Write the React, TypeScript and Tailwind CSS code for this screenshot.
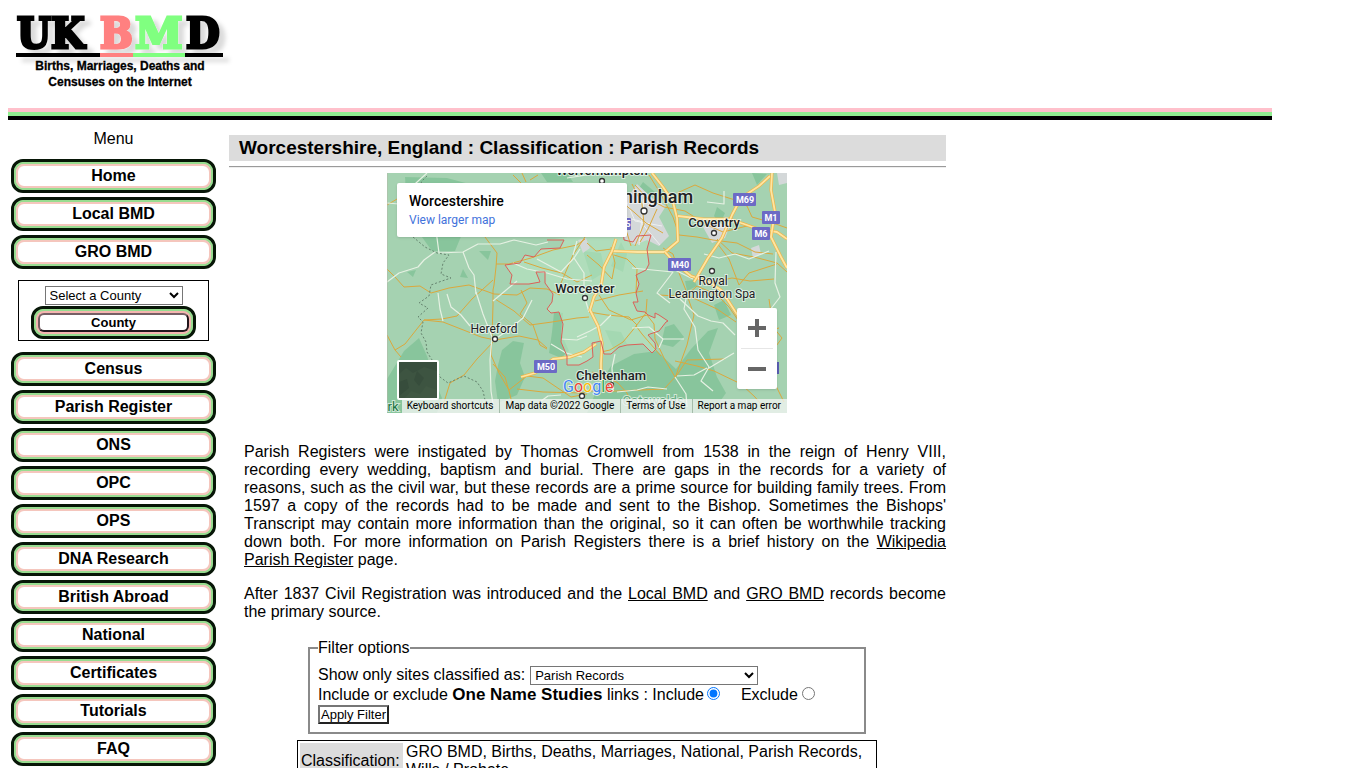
import React, { useState } from 'react';

const topLinks = ['Home', 'Local BMD', 'GRO BMD'];
const bottomLinks = ['Census', 'Parish Register', 'ONS', 'OPC', 'OPS', 'DNA Research', 'British Abroad', 'National', 'Certificates', 'Tutorials', 'FAQ'];

const MenuLink = ({ label }: { label: string }) => (
    <a href="#" className="block rounded-xl border-3 border-[#071607] bg-[#98dc90]">
        <span className="block rounded-[10px] border-2 border-[#98dc90] bg-[#ffc0cb]">
            <span className="block rounded-lg border-2 border-[#f5c6bd] bg-white text-center font-bold h-6 leading-[19px]">{label}</span>
        </span>
    </a>
);

const Logo = () => (
    <svg width="232" height="92" viewBox="8 8 232 92" role="img" aria-label="UK BMD">
        <defs>
            <filter id="logoShadow" x="-10%" y="-10%" width="130%" height="140%">
                <feDropShadow dx="6" dy="5" stdDeviation="2" floodColor="#000" floodOpacity="0.14" />
            </filter>
        </defs>
        <g filter="url(#logoShadow)" fontFamily="'DejaVu Serif Condensed', 'DejaVu Serif', serif" fontWeight="bold" fontSize="43" strokeWidth="3">
            <text x="17" y="48" stroke="#000">U</text>
            <text x="51" y="48" stroke="#000">K</text>
            <text x="100" y="48" fill="#ff8080" stroke="#ff8080">B</text>
            <text x="135" y="48" fontFamily="'DejaVu Serif', serif" fill="#80ff80" stroke="#80ff80">M</text>
            <text x="186" y="48" stroke="#000">D</text>
            <path d="M16 55H223" stroke="#000" strokeWidth="4" />
            <path d="M100 55H133" stroke="#ff8080" strokeWidth="4" />
            <path d="M133 55H185" stroke="#80ff80" strokeWidth="4" />
        </g>
        <g fontFamily="'Liberation Sans', Arial, sans-serif" fontWeight="bold" fontSize="12" textAnchor="middle" stroke="#000" strokeWidth=".3">
            <text x="120" y="70">Births, Marriages, Deaths and</text>
            <text x="120" y="86">Censuses on the Internet</text>
        </g>
    </svg>
);

const badges = [
    { t: 'M69', x: 358, y: 27 },
    { t: 'M1', x: 384, y: 45 },
    { t: 'M6', x: 374, y: 61 },
    { t: 'M40', x: 293, y: 92 },
    { t: 'M50', x: 159, y: 194 },
];

const minorRoads = [
    'M0 96L8 104 17 114 33 113 44 120 62 115 82 112 107 121 130 122 143 115 160 116 173 122',
    'M98 64L110 80 109 94 107 112 106 117 106 132 105 165 104 182 112 200 122 217',
    'M109 91L122 91 144 85 166 77 190 72 198 66',
    'M0 162L8 177 18 171 37 147 55 146 70 143 85 126 106 107M8 177L14 184M37 147L56 149 79 158 94 164 108 167 132 163 151 167 160 175',
    'M108 126L127 138 143 152 165 149 190 145 202 144',
    'M108 167L90 186 77 202 63 210 58 226 55 234',
    'M106 191L118 204 122 218 126 234M122 217L140 203 156 205 184 224 200 221',
    'M134 117L140 130 133 141 146 152 153 172 160 176',
    'M151 2L143 7M126 2L135 11',
    'M130 216L156 219 196 220 200 218 230 218 277 216 290 202 300 187 338 186',
    'M200 70L209 78 225 76M200 82L212 92 225 106 228 90 224 74',
    'M205 102L190 109 175 100 155 95 137 89',
    'M262 2L272 18 286 44 292 62 310 64 326 67 350 70 368 79 386 81',
    'M290 20L308 12 326 20 348 27 360 33 365 44 386 50 400 55',
    'M248 12L260 25 277 34 298 38 320 52 336 59 360 53',
    'M330 66L345 80 367 84 390 90 400 99',
    'M330 70L342 86 352 112 362 100 390 91',
    'M316 111L345 105 363 108 387 106',
    'M310 113L300 122 307 142 300 172 288 205',
    'M310 113L330 122 342 134 353 150 374 160 392 155',
    'M212 122L222 137 244 147 260 142 267 151 268 166 277 185 288 204',
    'M202 139L220 142 242 144 250 152 236 169 223 177 214 179',
    'M288 188L310 193 327 198 354 211 368 224 377 235',
    'M260 126L259 140 249 153 255 161 274 183',
    'M272 122L304 124 330 136 349 149',
    'M382 126L386 154 395 165 384 180 386 207 397 229',
    'M205 199L218 203 231 210 240 220 246 235',
    'M222 19L235 29 248 40 259 50 276 60M245 11L255 31 257 51 248 73',
    'M232 43L240 60 244 73M270 36L261 56 253 69',
    'M0 32L10 26M135 0L139 9M174 110L186 82 198 64',
    'M300 120L292 100 286 81 276 75',
    'M227 82L240 86 250 96 249 120M208 128L232 122 256 118',
];

const majorRoads = [
    'M225 78L251 79 278 79 291 68 290 45 286 29 276 14 265 0',
    'M229 66L225 78 217 94 214 113 207 124 203 137 211 153 215 170 214 190 214 208',
    'M291 43L317 46 342 46 357 51 371 56 390 59 400 66',
    'M278 79L289 91 304 103 322 109 334 117 342 129 355 149',
    'M307 109L321 85 335 65 345 42 354 25 372 13 383 3',
    'M385 0L384 17 388 39 384 64 394 84 400 95',
    'M134 204L148 200 166 186 183 184 197 179 209 171',
];

const whiteRoads = [
    'M48 50L52 80 76 79 91 71 113 71 127 67 149 72 161 69',
    'M48 79L37 87 31 94 12 100 0 109M76 79L82 95 87 102 89 121',
    'M51 120L53 136 56 148M60 121L64 134 74 142 83 153',
    'M89 119L96 141 105 164 103 187 104 218 106 231',
    'M145 127L136 145 120 158 108 166',
    'M130 108L118 118 106 128',
    'M150 86L174 99 187 85 193 76M187 85L197 100 197 122 202 139',
    'M224 142L214 152 203 158 190 164',
    'M278 77L288 97 306 106M300 121L297 136 308 154 311 177 322 194 314 208 326 218',
    'M293 126L311 143 324 148 336 150 348 162',
    'M290 203L307 202 320 195M288 204L299 221 300 234',
    'M322 195L347 180M245 155L262 154 276 166 297 166M276 166L272 175',
    'M245 95L286 99 270 120 283 130',
    'M317 81L332 85 348 81 362 86 382 78',
    'M0 30L12 31 29 10 40 0M389 79L388 110 393 124 383 137 371 150',
    'M320 29L337 31 337 18',
    'M164 171L179 180 195 184M174 166L190 167 200 163',
    'M230 219L250 217 261 214 280 216M150 231L161 223 174 222',
    'M228 181L225 195 226 218M180 5L200 2',
    'M126 90L140 96 160 100 180 106 205 108M186 82L190 68',
];

const border = 'M160 67L177 67 173 75 154 76 147 84 138 82 133 90 118 92 125 102 123 111 142 111 153 109 149 99 158 99 158 110 166 121 165 129 160 136 164 140 172 139 176 151 174 169 180 183 180 192 192 192 200 188 206 184 205 170 214 168 217 181 224 181 232 174 240 172 256 171 261 176 265 180 269 176 268 170 261 162 263 161 272 158 279 149 281 148 272 142 268 140 268 145 261 142 258 139 250 138 246 129 251 129 249 120 252 111 249 102 259 97 262 91 260 76 264 62 250 63 246 69 237 67 236 56';

const parks = [
    'M18 4L60 5 86 12 88 30 68 78 45 78 27 53 20 40Z',
    'M154 0L180 0 186 9 160 9Z',
    'M115 177L126 168 137 170 133 190 138 204 130 222 111 230 108 208 111 192Z',
    'M32 165L40 183 50 213 55 225 50 240 0 240 0 206 17 178Z',
    'M167 139L176 140 174 160 182 178 174 185 162 180 165 159Z',
    'M224 193L247 181 270 178 289 196 304 176 321 158 331 155 322 180 330 204 339 220 325 240 200 240 210 216Z',
    'M218 157L234 159 240 171 227 177Z',
    'M256 9L268 19 261 28 250 18Z',
    'M278 154L287 151 297 164 286 174 274 171Z',
    'M330 34L338 40 333 51 327 43ZM327 132L337 127 344 142 332 147Z',
    'M92 78L104 78 101 87ZM20 99L29 97 26 104ZM76 96L81 105 73 104Z',
    'M196 78L214 80 218 99 205 107ZM365 0L380 1 370 12Z',
    'M234 69L240 81 236 99 224 93ZM298 108L307 107 310 113 300 118Z',
];

const MapArt = () => (
    <svg className="block" width="400" height="240" viewBox="0 0 400 240" role="img" aria-label="Map of Worcestershire">
        <rect width="400" height="240" fill="#a5d2b1" />
        <g fill="#82c397" opacity=".8">{parks.map((d) => <path key={d} d={d} />)}</g>
        <path d={border} fill="#b8e5c2" opacity=".6" />
        <path d="M232 25L243 21 250 11 265 25 279 33 272 44 282 63 272 73 260 67 248 72 236 65ZM316 54L329 48 342 55 338 65 325 70ZM191 67L199 65 203 75 196 80ZM364 75L372 72 374 81 366 85ZM390 0H400V10L392 12Z" fill="#d4d8d9" />
        <path d="M232 43L253 48 273 72M238 25L248 48 275 53M257 26L252 72" fill="none" stroke="#eef0ef" strokeWidth="1" />
        <g fill="none" stroke="#dba83c" strokeWidth="1" strokeLinejoin="round">{minorRoads.map((d) => <path key={d} d={d} />)}</g>
        <g fill="none" stroke="#e6f1e3" strokeWidth="1.2" strokeLinejoin="round">{whiteRoads.map((d) => <path key={d} d={d} />)}</g>
        <g fill="none" strokeLinejoin="round">
            {majorRoads.map((d) => (
                <g key={d}>
                    <path d={d} stroke="#eeb54b" strokeWidth="3.2" />
                    <path d={d} stroke="#ffe5a0" strokeWidth="1.8" />
                </g>
            ))}
        </g>
        <path d="M40 3L34 9 38 15M26 64L38 74 50 80 62 82 56 90 54 101 64 105 55 108 44 112 42 123 32 130 41 135 31 144 36 149 34 160 39 169 40 179 47 190 53 204 61 210 77 203 90 209 96 218 98 227" fill="none" stroke="#66846f" strokeWidth="1" strokeDasharray="2 2" />
        <path d={border} fill="none" stroke="#db6058" strokeWidth="1" />
        <path d="M0 0V240" stroke="#b4b8a8" strokeWidth="1" />
        <g fill="#fff" stroke="#333" strokeWidth="1.3">
            <circle cx="215" cy="8" r="2.5" />
            <circle cx="257" cy="38" r="3" />
            <circle cx="327" cy="60" r="2.5" />
            <circle cx="325" cy="98" r="2.5" />
            <circle cx="198" cy="125" r="2.5" />
            <circle cx="108" cy="166" r="2.5" />
            <circle cx="224" cy="212" r="2.5" />
            <circle cx="195" cy="223" r="2.5" />
        </g>
        <g fontFamily="Roboto, sans-serif" fill="#202124" stroke="#fff" strokeWidth="2" strokeOpacity=".6" paintOrder="stroke" fontSize="12" textAnchor="middle">
            <text x="215" y="2" fontSize="13" fontWeight="500">Wolverhampton</text>
            <text x="257" y="30" fontSize="18" fontWeight="500">Birmingham</text>
            <text x="327" y="54" fontWeight="500" fontSize="13">Coventry</text>
            <text x="326" y="112">Royal</text>
            <text x="325" y="125">Leamington Spa</text>
            <text x="198" y="120" fontWeight="500" fontSize="13">Worcester</text>
            <text x="107" y="160">Hereford</text>
            <text x="224" y="207" fontWeight="500" fontSize="13">Cheltenham</text>
            <text x="266" y="232" fontSize="13" fill="#5fa97c">Cotswolds</text>
            <text x="6" y="238" fontSize="13" fill="#197341">rk</text>
        </g>
        <g fontFamily="Roboto, sans-serif" fontSize="9" fontWeight="bold" textAnchor="middle" fill="#fff">
            <rect x="226" y="45" width="18" height="12" rx="1" fill="#6c6ac5" />
            <text x="241" y="54">5</text>
            <rect x="381" y="189" width="11" height="12" fill="#5a5db2" />
            {badges.map((b) => (
                <g key={b.t}>
                    <rect x={b.t.length === 2 ? b.x - 9 : b.x - 12} y={b.y - 7} width={b.t.length === 2 ? 18 : 23} height="13" rx="1" fill="#6c6ac5" />
                    <text x={b.x} y={b.y + 3}>{b.t}</text>
                </g>
            ))}
        </g>
        <g fontFamily="Roboto, sans-serif" fontSize="16" stroke="#fff" strokeWidth="1.5" strokeOpacity=".8" paintOrder="stroke">
            <text x="176" y="219"><tspan fill="#4285f4">G</tspan><tspan fill="#ea4335">o</tspan><tspan fill="#fbbc05">o</tspan><tspan fill="#4285f4">g</tspan><tspan fill="#34a853">l</tspan><tspan fill="#ea4335">e</tspan></text>
        </g>
    </svg>
);

const MapPanel = () => (
    <div className="relative mx-[158px] w-[400px] overflow-hidden font-['Roboto',sans-serif]">
        <MapArt />
        <div className="absolute left-2.5 top-2.5 w-[230px] h-[54px] rounded-xs bg-white px-3 pt-2.5 shadow-sm">
            <div className="text-sm leading-4 font-medium text-black">Worcestershire</div>
            <a href="#" className="block text-xs leading-[22px] text-[#4272db]">View larger map</a>
        </div>
        <div className="absolute right-2.5 top-[135px] w-10 rounded-xs bg-white shadow-sm">
            <button aria-label="Zoom in" className="flex h-10 w-full items-center justify-center">
                <svg width="18" height="18" viewBox="0 0 18 18"><path d="M9 0V18M0 9H18" stroke="#666" strokeWidth="4" /></svg>
            </button>
            <div className="mx-1 h-px bg-[#e6e6e6]" />
            <button aria-label="Zoom out" className="flex h-10 w-full items-center justify-center">
                <svg width="18" height="18" viewBox="0 0 18 18"><path d="M0 9H18" stroke="#666" strokeWidth="4" /></svg>
            </button>
        </div>
        <div className="absolute bottom-0 right-0 flex h-3.5 text-[10px] leading-[14px] whitespace-nowrap text-black">
            <button className="bg-[#f5f5f5]/75 pl-[5px] pr-1.5">Keyboard shortcuts</button>
            <span className="border-l border-[#a5bcaa] bg-[#f5f5f5]/75 pl-[5px] pr-1.5">Map data ©2022 Google</span>
            <a href="#" className="border-l border-[#a5bcaa] bg-[#f5f5f5]/75 pl-[5px] pr-1.5">Terms of Use</a>
            <a href="#" className="border-l border-[#a5bcaa] bg-[#f5f5f5]/75 pl-[5px] pr-1.5">Report a map error</a>
        </div>
        <button aria-label="Show satellite imagery" className="absolute left-2.5 top-[187px] h-10 w-[42px] overflow-hidden rounded-xs border-2 border-white bg-[#3d5441]">
            <svg className="block" width="38" height="38" viewBox="0 0 38 38">
                <path d="M0 0H38V9L25 5 14 11 7 6 0 12Z" fill="#384e3d" />
                <path d="M4 38L12 29 21 32 27 24 38 28V38Z" fill="#415844" />
                <path d="M0 20L8 17 10 26 0 34ZM18 9L25 16 20 24 15 18Z" fill="#374d3c" />
            </svg>
        </button>
    </div>
);

const App = () => {
    const [classification, setClassification] = useState('Parish Records');
    const [studies, setStudies] = useState('include');

    return (
        <div className="p-2 pb-0 bg-white text-black text-base leading-[18px] font-['Liberation_Sans',Arial,sans-serif]">
            <header className="max-w-[1264px]">
                <div className="h-[100px]"><Logo /></div>
                <div className="h-1 bg-[#ffc0cb]" />
                <div className="h-1 bg-[#90ee90]" />
                <div className="h-1 bg-black" />
            </header>

            <div className="flex items-start">
                <nav className="w-[211px] shrink-0 px-[3px] pt-2.5">
                    <p className="mb-[11px] text-center">Menu</p>
                    <div className="space-y-1">
                        {topLinks.map((l) => <MenuLink key={l} label={l} />)}
                    </div>
                    <form className="mx-[7px] my-[11px] flex h-[61px] flex-col items-center border border-black pt-[5px]" onSubmit={(e) => e.preventDefault()}>
                        <select aria-label="County" className="h-[19px] w-[138px] border border-[#767676] bg-white text-[13px]">
                            <option>Select a County</option>
                            <option>Worcestershire</option>
                        </select>
                        <div className="mt-px rounded-xl border-3 border-[#071607] bg-[#98dc90]">
                            <div className="rounded-[10px] border-2 border-[#98dc90] bg-[#f5b5b0] p-0.5">
                                <button className="block h-[19px] w-[151px] rounded-md border-2 border-t-[#765f65] border-l-[#765f65] border-r-[#21151c] border-b-[#21151c] bg-white text-[13px] leading-[15px] font-bold">County</button>
                            </div>
                        </div>
                    </form>
                    <div className="space-y-1">
                        {bottomLinks.map((l) => <MenuLink key={l} label={l} />)}
                    </div>
                </nav>

                <main className="ml-2.5 w-full max-w-[717px] pt-[15px]">
                    <h1 className="h-[26px] bg-[#dcdcdc] pl-2.5 text-[19px] leading-[25px] font-bold">Worcestershire, England : Classification : Parish Records</h1>
                    <hr className="mt-[5px] mb-[5px] border-t border-b border-t-[#9a9a9a] border-b-[#eee]" />
                    <MapPanel />

                    <div className="mt-[30px] ml-[15px] space-y-4 text-justify">
                        <p>
                            Parish Registers were instigated by Thomas Cromwell from 1538 in the reign of Henry VIII, recording every wedding, baptism and burial. There are gaps in the records for a variety of reasons, such as the civil war, but these records are a prime source for building family trees. From 1597 a copy of the records had to be made and sent to the Bishop. Sometimes the Bishops' Transcript may contain more information than the original, so it can often be worthwhile tracking down both. For more information on Parish Registers there is a brief history on the <a href="#" className="underline">Wikipedia Parish Register</a> page.
                        </p>
                        <p>
                            After 1837 Civil Registration was introduced and the <a href="#" className="underline">Local BMD</a> and <a href="#" className="underline">GRO BMD</a> records become the primary source.
                        </p>
                    </div>

                    <form onSubmit={(e) => e.preventDefault()}>
                        <fieldset className="ml-[79px] mr-20 mt-[18px] border-2 border-[#8a8a8a] p-2">
                            <legend>Filter options</legend>
                            <div className="flex h-5 items-center">
                                <label htmlFor="classified" className="mr-[5px]">Show only sites classified as:</label>
                                <select id="classified" value={classification} onChange={(e) => setClassification(e.target.value)} className="h-[19px] w-[228px] border border-[#767676] bg-white text-[13px]">
                                    <option>Parish Records</option>
                                    <option>Census</option>
                                    <option>Wills / Probate</option>
                                </select>
                            </div>
                            <div className="flex h-5 items-center whitespace-pre">
                                <span>Include or exclude <b className="text-[17px]">One Name Studies</b> links : </span>
                                <label htmlFor="include">Include</label>
                                <input id="include" type="radio" name="studies" checked={studies === 'include'} onChange={() => setStudies('include')} className="ml-[3px] mr-[21px] mb-1 size-[13px]" />
                                <label htmlFor="exclude">Exclude</label>
                                <input id="exclude" type="radio" name="studies" checked={studies === 'exclude'} onChange={() => setStudies('exclude')} className="ml-1 mb-1 size-[13px]" />
                            </div>
                            <button className="block h-[19px] w-[71px] border-2 border-t-[#767676] border-l-[#767676] border-r-[#222] border-b-[#222] bg-white text-[13px] leading-[15px]">Apply Filter</button>
                        </fieldset>
                    </form>

                    <table className="ml-[68px] mt-1.5 w-[580px] border-separate border-spacing-0.5 border border-black">
                        <tbody>
                            <tr>
                                <th scope="row" className="w-[103px] bg-[#dcdcdc] px-px text-left align-middle font-normal">Classification:</th>
                                <td className="px-px">GRO BMD, Births, Deaths, Marriages, National, Parish Records, Wills / Probate</td>
                            </tr>
                        </tbody>
                    </table>
                </main>
            </div>
        </div>
    );
};

export default App;
